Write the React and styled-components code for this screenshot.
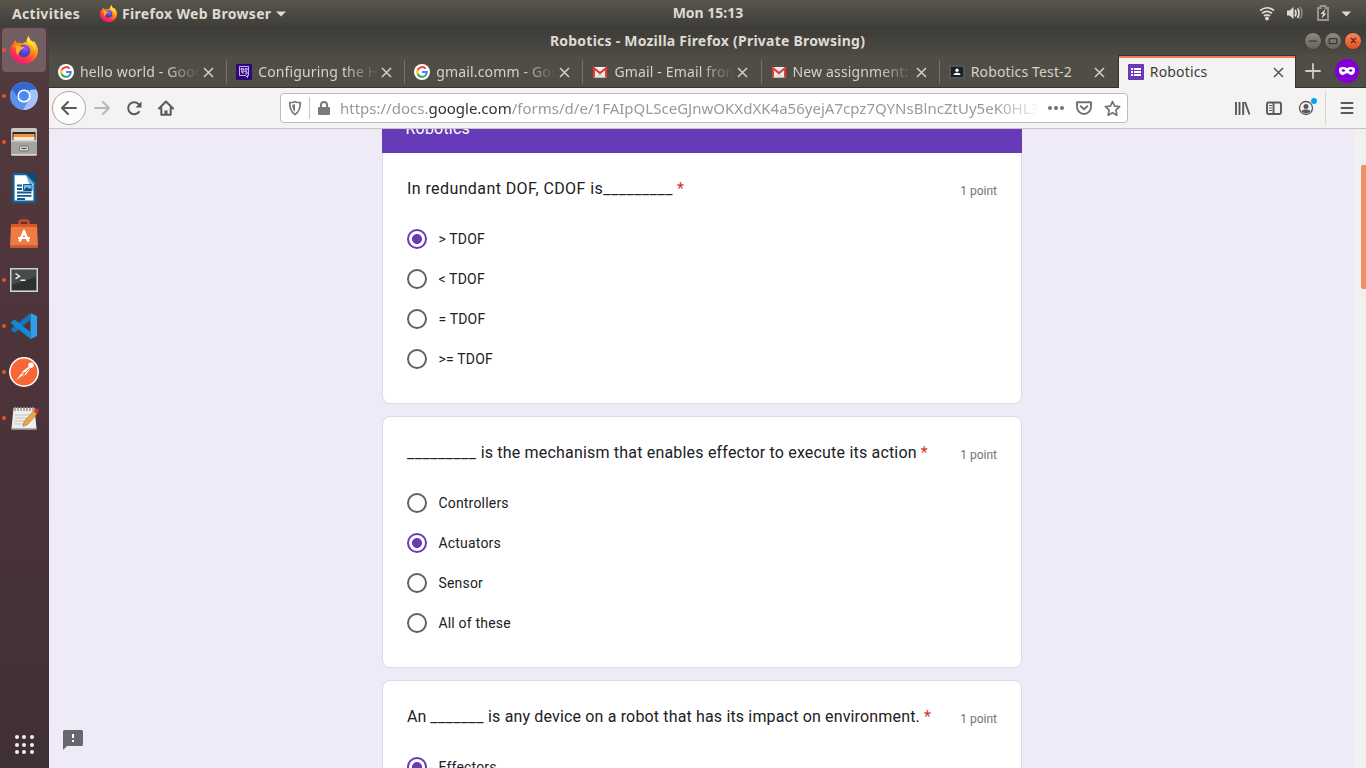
import React from "react";
import styled, { createGlobalStyle, css } from "styled-components";

const ui = `"Noto Sans", "Open Sans", sans-serif`;

const GlobalStyle = createGlobalStyle`
  * { box-sizing: border-box; }
  html, body { margin: 0; overflow: hidden; }
  svg { display: block; flex: none; }
`;

const Desktop = styled.div`
  width: 1366px;
  height: 768px;
  display: flex;
  flex-direction: column;
  overflow: hidden;
  font-family: ${ui};
`;

const Text = styled.span`
  white-space: pre;
  letter-spacing: ${(p) => p.$spacing || 0}px;
`;

/* ---------- system bar ---------- */
const SystemBar = styled.header`
  height: 27px;
  flex: none;
  display: grid;
  grid-template-columns: 1fr auto 1fr;
  align-items: center;
  padding: 0 14px 0 12px;
  background: linear-gradient(#59564d, #3e3d39);
  color: #dfdbd2;
  font-size: 14px;
  font-weight: 700;
  line-height: 26px;
`;
const SystemGroup = styled.div`
  display: flex;
  align-items: center;
  justify-content: ${(p) => (p.$end ? "flex-end" : "flex-start")};
`;
const AppMenu = styled.div`
  display: flex;
  align-items: center;
  margin-left: 20px;
  gap: 5px;
`;
const Clock = styled.div`
  padding-left: 52px;
  padding-bottom: 1px;
`;

/* ---------- dock ---------- */
const Workspace = styled.div`
  flex: 1;
  display: flex;
  min-height: 0;
`;
const Dock = styled.nav`
  width: 49px;
  flex: none;
  display: flex;
  flex-direction: column;
  gap: 2px;
  padding: 1px 2px 9px;
  background: linear-gradient(#523a3f, #4d343a 45%, #3f3034);
`;
const Launcher = styled.div`
  height: 44px;
  width: 44px;
  display: flex;
  align-items: center;
  border-radius: 4px;
  background: ${(p) => (p.$active ? "#725d61" : "transparent")};
`;
const RunningDot = styled.i`
  width: 4px;
  height: 4px;
  border-radius: 50%;
  margin-right: 3px;
  background: ${(p) => (p.$on ? "#e95420" : "transparent")};
`;
const LauncherIcon = styled.div`
  width: 30px;
  display: grid;
  justify-items: center;
`;
const AppGrid = styled.div`
  margin: auto 0 5px 12.5px;
  display: grid;
  grid-template-columns: repeat(3, 4px);
  gap: 3.5px;
  i { height: 4px; border-radius: 50%; background: #f2f0ee; }
`;

/* ---------- browser chrome ---------- */
const Browser = styled.main`
  flex: 1;
  min-width: 0;
  display: flex;
  flex-direction: column;
  background: #504d46;
`;
const TitleBar = styled.div`
  height: 28px;
  flex: none;
  display: grid;
  grid-template-columns: 1fr auto 1fr;
  align-items: center;
  padding: 0 5px 1px;
  background: linear-gradient(#3c3b37, #4d4a43);
  color: #dfdbd2;
  font-size: 14px;
  font-weight: 700;
`;
const WindowButtons = styled.div`
  grid-column: 3;
  display: flex;
  justify-content: flex-end;
  gap: 4px;
`;
const WindowButton = styled.span`
  width: 16px;
  height: 16px;
  border-radius: 50%;
  display: grid;
  place-items: center;
  background: ${(p) => (p.$close ? "linear-gradient(#f4845f, #e4521f)" : "linear-gradient(#8c8981, #66645d)")};
  box-shadow: 0 0 0 .5px #35342f;
`;
const TabStrip = styled.div`
  height: 33px;
  flex: none;
  display: flex;
  background: #504d46;
  border-bottom: 1px solid #34332f;
`;
const Tab = styled.div`
  width: 178.15px;
  height: 33px;
  flex: none;
  display: flex;
  align-items: center;
  padding: 1px 8px 0 9px;
  font-size: 14px;
  color: #d6d2c8;
  ${(p) => p.$active ? css`
    color: #3d3c3a;
    background: #f4f3f1;
    border: 1px solid #34332f;
    border-bottom: 0;
    padding: 0 8px 0 9px;
    box-shadow: inset 0 2px #f27a50;
  ` : css`
    background: linear-gradient(#77736a, #77736a) right 5px / 1px 24px no-repeat;
    ${p.$last && "background: none;"}
  `}
`;
const TabLabel = styled.div`
  width: 120px;
  margin-left: 6px;
  overflow: hidden;
  white-space: pre;
  padding-bottom: 1px;
  letter-spacing: 0.15px;
  mask-image: ${(p) => (p.$fade ? "linear-gradient(90deg, #000 86px, transparent 120px)" : "none")};
`;
const TabClose = styled.div`
  margin-left: 3px;
`;
const TabActions = styled.div`
  flex: 1;
  display: flex;
  align-items: center;
  justify-content: space-between;
  padding: 0 7px 0 9px;
`;
const Toolbar = styled.div`
  height: 41px;
  flex: none;
  display: flex;
  align-items: center;
  background: #f4f3f1;
  border-bottom: 1px solid #c6c3c0;
`;
const NavButtons = styled.div`
  width: 231px;
  display: flex;
  align-items: center;
  padding-left: 3px;
`;
const BackButton = styled.div`
  width: 34px;
  height: 34px;
  border: 1px solid #a9a7a4;
  border-radius: 50%;
  background: #fcfcfb;
  display: grid;
  place-items: center;
  margin-right: 8px;
`;
const NavIcon = styled.div`
  margin-right: ${(p) => p.$gap}px;
`;
const UrlBar = styled.div`
  width: 848px;
  height: 30px;
  display: flex;
  align-items: center;
  border: 1px solid #bfbcb9;
  border-radius: 4px;
  background: #fff;
  padding: 0 6px;
`;
const UrlDivider = styled.i`
  width: 1px;
  height: 22px;
  background: #c8c6c4;
  margin: 0 7px 0 6px;
`;
const Url = styled.div`
  width: 700px;
  margin-left: 9px;
  overflow: hidden;
  white-space: pre;
  font-size: 15px;
  color: #999;
  mask-image: linear-gradient(90deg, #000 655px, transparent 700px);
  b { font-weight: 400; color: #333; }
`;
const UrlActions = styled.div`
  display: flex;
  align-items: center;
  gap: 12px;
  margin-left: 9px;
`;
const ToolActions = styled.div`
  flex: 1;
  display: flex;
  align-items: center;
  justify-content: flex-end;
  padding-right: 11px;
`;
const ToolDivider = styled.i`
  width: 1px;
  height: 34px;
  background: #d8d6d3;
  margin: 0 13px 0 6px;
`;

/* ---------- form ---------- */
const Page = styled.div`
  flex: 1;
  min-height: 0;
  display: flex;
  background: #eeeaf8;
`;
const Aside = styled.div`
  width: 333px;
  display: flex;
  align-items: flex-end;
  padding: 0 0 18px 14px;
`;
const Form = styled.div`
  width: 640px;
  overflow: hidden;
  font-family: Roboto, sans-serif;
  color: #202124;
`;
const Banner = styled.div`
  height: 24px;
  background: #673ab7;
  color: #fff;
  padding-left: 23.5px;
  font-size: 16px;
  letter-spacing: 0.2px;
  line-height: 24px;
  overflow: hidden;
  span { display: block; margin-top: -12px; }
`;
const Card = styled.section`
  height: ${(p) => (p.$first ? 251 : 252)}px;
  margin-bottom: 12px;
  padding: 24px 24px 0;
  border: 1px solid #dadce0;
  border-radius: 8px;
  background: #fff;
  ${(p) => p.$first && css`border-top: 0; border-radius: 0 0 8px 8px;`}
`;
const QuestionHead = styled.div`
  display: flex;
  justify-content: space-between;
  height: 24px;
  margin-bottom: 18px;
  line-height: 23px;
  font-size: 16px;
  white-space: pre;
`;
const Required = styled.span`
  color: #d93025;
`;
const Points = styled.span`
  font-size: 12px;
  line-height: 29px;
  color: #70757a;
`;
const Option = styled.div`
  height: 40px;
  display: flex;
  align-items: center;
  gap: 11.4px;
  font-size: 14px;
  letter-spacing: 0.2px;
`;
const Radio = styled.span`
  width: 20px;
  height: 20px;
  border-radius: 50%;
  border: 2px solid ${(p) => (p.$on ? "#673ab7" : "#5f6368")};
  background: ${(p) => (p.$on ? "radial-gradient(circle, #673ab7 4.6px, transparent 5.3px)" : "none")};
`;
const ScrollGutter = styled.div`
  margin-left: auto;
  width: 12px;
  background: #f1f0ee;
  padding: 36px 0 0 7px;
`;
const ScrollThumb = styled.div`
  height: 124px;
  background: #f08e66;
  border-radius: 2px 0 0 2px;
`;

/* ---------- icons ---------- */
const Firefox = ({ size }) => (
  <svg width={size} height={size} viewBox="0 0 28 28">
    <defs>
      <linearGradient id="fxBody" x1=".85" y1="0" x2=".25" y2="1">
        <stop offset="0" stopColor="#fff44f" /><stop offset=".4" stopColor="#ff980e" />
        <stop offset=".72" stopColor="#ff3647" /><stop offset="1" stopColor="#e31587" />
      </linearGradient>
      <radialGradient id="fxGlobe" cx=".6" cy=".3"><stop offset="0" stopColor="#9059ff" /><stop offset="1" stopColor="#4a3fc0" /></radialGradient>
    </defs>
    <path fill="url(#fxBody)" d="M4 6.5c.3-.9.8-1.700 1.500-2.200.2 1.100.7 2 1.500 2.700 1.900-.6 4-.4 5.500.500 1-1.200 2.600-1.800 4-1.500C16.300 3.500 17 1.700 18.800 0c.3 2.900 2.100 4.200 3.900 6.100.5-.1.600-.800.500-1.500 3.300 3 4.900 6.800 4.800 10.500C27.800 22.500 21.700 28 14 28S0 22 0 14.700C0 11.500 1.500 8.400 4 6.500z" />
    <circle cx="14" cy="15" r="6.200" fill="url(#fxGlobe)" />
    <path fill="#ffae22" d="M3.500 10.500C6 9 8 9.200 10 10.200c1.200.7 2.600.5 4.300.6-.2 1.500-1.500 2.200-3 2.700-.7.400-.9 1.300-1.700 2.200-1 1-1.600 2.300-1.200 3.500-2.700-1.900-2.800-5.500-1.900-7.500-1.200-.4-2.300-.9-3-1.200z" />
    <path fill="#ffe34a" d="M18.800 0c.3 2.900 2.100 4.200 3.900 6.100 2.300 2.500 3.300 6 2.300 9.200-.5-3.400-2.500-5.800-5.500-7-2-.9-3.200-4.500-.7-8.300z" opacity=".8" />
  </svg>
);
const Chromium = () => (
  <svg width="28" height="28" viewBox="0 0 28 28">
    <circle cx="14" cy="14" r="14" fill="#5b93ec" />
    <path d="M2 7A14 14 0 0 1 26.200 7.500L14 8 8.500 17z" fill="#3367cf" />
    <path d="M26.200 7.500A14 14 0 0 1 13 28l6.300-10.500L20 8z" fill="#a4c4f8" />
    <circle cx="14" cy="14" r="6.600" fill="#fff" /><circle cx="14" cy="14" r="5" fill="#4b8bf0" />
  </svg>
);
const Files = () => (
  <svg width="28" height="28" viewBox="0 0 28 28">
    <rect x="1" y="0" width="26" height="28" rx="2" fill="#c9c7c3" />
    <path d="M2.500 4h23v8h-23z" fill="#352820" /><path d="M3.500 6h21v5h-21z" fill="#ed9144" /><path d="M3.500 9h21v3h-21z" fill="#f3e9d8" />
    <path d="M1 12h26v14a1.500 1.500 0 0 1-1.500 1.500h-23A1.500 1.500 0 0 1 1 26z" fill="#a6a49f" /><path d="M1 12h26v1.500H1zM1 26h26v1H1z" fill="#d6d4d0" />
    <rect x="9.500" y="18" width="9" height="5" rx="1.200" fill="#d9d7d3" stroke="#6f6d69" /><path d="M11.500 20.500h5" stroke="#555" strokeWidth="1.300" />
  </svg>
);
const Writer = () => (
  <svg width="28" height="30" viewBox="0 0 28 30">
    <path d="M3.500 1.200h13l8 8.500v19h-21z" fill="#fff" stroke="#0f639b" strokeWidth="2.200" />
    <path d="M15 0h11v11z" fill="#0b4b78" /><path d="M15.500 0l10.500 11h-7z" fill="#2a8dcb" opacity=".65" />
    <path d="M7 12.500h5M7 16h5M7 19.500h14.500M7 22.800h14.500M7 26h8" stroke="#0f5c92" strokeWidth="1.800" />
    <path d="M13.500 11.500h8.500v6h-8.500z" fill="#79b6df" stroke="#0f5c92" /><path d="M14 17l3-3 2 2 2-1v2z" fill="#12415f" />
  </svg>
);
const Software = () => (
  <svg width="28" height="30" viewBox="0 0 28 30">
    <path d="M9.500 7V3.500C9.500 2 10.500 1.500 12 1.500h4c1.500 0 2.500.5 2.500 2V7" fill="none" stroke="#d3491d" strokeWidth="2.400" />
    <path d="M1 5h26l1 23.500H0z" fill="#ec7c41" /><path d="M1 5h26v3H1z" fill="#d9582b" /><path d="M0 26h28v2.500H0z" fill="#d55c2b" />
    <path d="M9.500 22.500L14 12.500l4.500 10" stroke="#fff" strokeWidth="2.500" fill="none" /><path d="M8 19h12" stroke="#fff" strokeWidth="2" />
  </svg>
);
const Terminal = () => (
  <svg width="28" height="24" viewBox="0 0 28 24">
    <rect x=".7" y=".7" width="26.600" height="22.600" fill="#2c3132" stroke="#d4d3d0" strokeWidth="1.700" />
    <path d="M2 2h24v7L2 17z" fill="#454b4b" />
    <path d="M5.500 5.500l4 2.700-4 2.700M10.500 12.200h5" fill="none" stroke="#eee" strokeWidth="1.400" />
  </svg>
);
const Code = () => (
  <svg width="28" height="28" viewBox="0 0 28 28">
    <path d="M20.500 1.200L27 4v20l-6.500 3z" fill="#2d9fec" />
    <path d="M20.500 1l-.2 7L5 20.500 1.200 18.700V17z" fill="#1178bd" /><path d="M1.200 10L4.500 7.500 20.500 20v7L1.200 11.500z" fill="#1689d2" />
  </svg>
);
const Postman = () => (
  <svg width="30" height="30" viewBox="0 0 30 30">
    <circle cx="15" cy="15" r="14.200" fill="#f96736" stroke="#fff" strokeWidth="1.500" />
    <path d="M7 23.500l7-9.500 5.500-4.200 1.700 1.700-4 5.700z" fill="#fff" /><circle cx="22" cy="8.200" r="2.700" fill="#fff" />
    <path d="M12.500 16.500l3.500-.8-1.500 3M8 23l6.500-5 5.500-6.500" fill="none" stroke="#ee6b3d" strokeWidth="1" />
  </svg>
);
const Notes = () => (
  <svg width="29" height="28" viewBox="0 0 29 28">
    <path d="M3.500 4h21l2 20.500H1.500z" fill="#eeeeeb" /><path d="M1.500 24h25v1.700h-25z" fill="#b1aead" />
    <path d="M5 3v4M8 3v4M11 3v4M14 3v4M17 3v4M20 3v4M23 3v4" stroke="#979592" strokeWidth="1.500" />
    <path d="M5 11h15M5 14h12M4.500 17h11M4.500 20h10" stroke="#c4c4c1" />
    <path d="M14.200 17.500L23.500 7l3.500 3L17.500 20.500l-4.500 1.800z" fill="#eba744" stroke="#9d6423" strokeWidth=".6" />
    <path d="M23.500 7l2.500-2.200c1.500-.8 3.500.8 2.500 2.800L27 10z" fill="#d9343e" />
  </svg>
);
const Google = () => (
  <svg width="16" height="16" viewBox="0 0 16 16">
    <circle cx="8" cy="8" r="8" fill="#fff" />
    <g fill="none" strokeWidth="2">
      <path d="M11.600 4.600A4.800 4.800 0 0 0 3.700 6" stroke="#ea4335" /><path d="M3.700 6a4.800 4.800 0 0 0 0 4" stroke="#fbbc05" />
      <path d="M3.700 10a4.800 4.800 0 0 0 7.500 1.700" stroke="#34a853" /><path d="M8 8h4.800a4.800 4.800 0 0 1-1.600 3.700" stroke="#4285f4" />
    </g>
  </svg>
);
const PurpleNote = () => (
  <svg width="16" height="16" viewBox="0 0 16 16">
    <path d="M0 0h16v16H0z" fill="#2f0878" />
    <path d="M3.500 2.500h9v9h-1v2l-2-2h-6zM5 4.500h2.500v1.500H5zM9 4.500h2.200V6H9zM5 8h2v2M9 8h2.200v2H9M5 7.200h6" fill="none" stroke="#d9c9ff" strokeWidth=".9" />
  </svg>
);
const Gmail = () => (
  <svg width="16" height="16" viewBox="0 0 16 16">
    <path d="M1 3h14v10.500H1z" fill="#f3f1ef" /><path d="M3 13.500L8 9l5 4.500z" fill="#dedbd8" />
    <path d="M2 13.500V4.200l6 4.900 6-4.900v9.300" fill="none" stroke="#dc4035" strokeWidth="2.100" />
  </svg>
);
const Classroom = () => (
  <svg width="16" height="16" viewBox="0 0 16 16">
    <rect y="1" width="16" height="14" rx="1" fill="#51555b" /><path d="M2 3h12v10H2z" fill="#1c2024" />
    <circle cx="8" cy="6.200" r="1.700" fill="#fff" /><path d="M4.500 11c0-3 7-3 7 0z" fill="#fff" />
  </svg>
);
const FormsIcon = () => (
  <svg width="16" height="16" viewBox="0 0 16 16">
    <rect width="16" height="16" rx="1" fill="#673ab7" />
    <path d="M3 4h2v2H3zM6 4h7v2H6zM3 7h2v2H3zM6 7h7v2H6zM3 10h2v2H3zM6 10h7v2H6z" fill="#fff" />
  </svg>
);
const Cross = ({ color }) => (
  <svg width="11" height="11" viewBox="0 0 11 11"><path d="M1 1l9 9M10 1l-9 9" stroke={color} strokeWidth="1.600" /></svg>
);
const Mask = () => (
  <svg width="24" height="24" viewBox="0 0 24 24">
    <circle cx="12" cy="12" r="12" fill="#8000d7" />
    <path fillRule="evenodd" fill="#fff" d="M4 10.500C4.200 7.500 9 7.500 12 9c3-1.500 7.800-1.500 8 1.500.1 3-1.300 5.500-3.800 5.500-1.700 0-2.500-1.700-4.200-1.700S9.500 16 7.800 16C5.300 16 3.900 13.500 4 10.500zm2.300 1.200c1.500 1.600 3 1.500 4-.2-1.300-1.600-3-1.600-4 .2zm7.400-.2c1 1.700 2.500 1.800 4 .2-1-1.800-2.700-1.800-4-.2z" />
  </svg>
);
const Line = ({ size = 16, d, w = 2, color = "#5a5957" }) => (
  <svg width={size} height={size} viewBox="0 0 16 16" fill="none" stroke={color} strokeWidth={w} strokeLinecap="round" strokeLinejoin="round"><path d={d} /></svg>
);
const Caret = () => (
  <svg width="10" height="6" viewBox="0 0 10 6"><path d="M0 .5h10L5 5.500z" fill="#dfdbd2" /></svg>
);
const StatusIcons = () => (
  <svg width="92" height="18" viewBox="1260 5 92 18">
    <g fill="none" stroke="#dfdbd2" strokeWidth="1.700">
      <path d="M1260 10.500q7-5.500 14 0" /><path d="M1262 13.300q5-4 10 0" /><path d="M1264 16q3-2.400 6 0" />
      <path d="M1295 10q2 3 0 6.500" /><path d="M1297.500 8.500q3 4.500 0 9.500" /><path d="M1300 7q4 6 0 12" opacity=".4" />
    </g>
    <circle cx="1267" cy="18.500" r="1.900" fill="#dfdbd2" />
    <path d="M1287 10.500h2.500l4-3.500v12l-4-3.500h-2.500z" fill="#dfdbd2" />
    <path d="M1318 8h2.500V6h5v2h2.500v12h-10z" fill="none" stroke="#98958d" strokeWidth="1.900" />
    <path d="M1325.500 9l-5 5h2.500l-1.500 4.500 5-5h-2.500z" fill="#dfdbd2" />
    <path d="M1341.500 11.500h9.500l-4.700 5z" fill="#dfdbd2" />
  </svg>
);
const Reload = () => (
  <svg width="16" height="16" viewBox="0 0 16 16" fill="none" stroke="#5a5957" strokeWidth="2">
    <path d="M13.400 11.200A6 6 0 1 1 12.300 3.800L13.500 5" /><path d="M15.500 1.500v6H9.500z" fill="#5a5957" stroke="none" />
  </svg>
);
const Home = () => (
  <svg width="16" height="16" viewBox="0 0 16 16" fill="none" stroke="#5a5957" strokeWidth="2" strokeLinejoin="round" strokeLinecap="round">
    <path d="M1 8.500L8 1.500l7 7M3.300 8v6.700h9.400V8" /><path d="M8 14v-3.500" strokeWidth="3" strokeLinecap="butt" />
  </svg>
);
const Shield = () => (
  <svg width="16" height="16" viewBox="0 0 16 16"><path d="M8 1.700c2 .7 3.700 1 5.300 1C13.300 8.500 12 12 8 14.500 4 12 2.700 8.500 2.700 2.700c1.600 0 3.300-.3 5.300-1z" fill="none" stroke="#7b7a78" strokeWidth="1.700" /><path d="M8 4.200v7.700C6 10.200 5.200 8 5.100 4.800z" fill="#7b7a78" /></svg>
);
const Lock = () => (
  <svg width="14" height="16" viewBox="0 0 14 16"><path d="M4 7V5a3 3 0 0 1 6 0v2" fill="none" stroke="#7b7a78" strokeWidth="2" /><rect x="1" y="7" width="12" height="8" rx="1.300" fill="#7b7a78" /></svg>
);
const Pocket = () => (
  <svg width="16" height="16" viewBox="0 0 16 16" fill="none" stroke="#737270" strokeWidth="1.900" strokeLinejoin="round" strokeLinecap="round"><path d="M1 2.200h14V7a7 7 0 0 1-14 0z" /><path d="M4.700 6.200L8 9.300l3.300-3.100" /></svg>
);
const Star = () => (
  <svg width="17" height="17" viewBox="0 0 17 17"><path d="M8.500 1.500l2.100 4.600 5 .6-3.700 3.500 1 5-4.400-2.500-4.400 2.500 1-5L1.400 6.700l5-.6z" fill="none" stroke="#737270" strokeWidth="1.700" strokeLinejoin="round" /></svg>
);
const More = () => (
  <svg width="16" height="16" viewBox="0 0 16 16" fill="#737270"><circle cx="2" cy="8" r="2" /><circle cx="8" cy="8" r="2" /><circle cx="14" cy="8" r="2" /></svg>
);
const ToolIcons = () => (
  <svg width="86" height="24" viewBox="1233 96 86 24" fill="none" stroke="#5a5957" strokeWidth="1.900">
    <path d="M1236 102v13M1239.500 102v13M1243.200 102v13M1245 102l4.500 12.500" />
    <rect x="1267" y="102.500" width="14" height="11.500" rx="1.500" /><path d="M1273.500 102.500v11.500" /><path d="M1269 105.500h3M1269 108h3M1269 110.500h3" strokeWidth="1" />
    <circle cx="1306" cy="108" r="6.500" strokeWidth="1.300" /><circle cx="1306" cy="106.500" r="2.500" fill="#5a5957" stroke="none" /><path d="M1301.500 111c1.500-2 7.500-2 9 0-1.500 3.300-7.500 3.300-9 0z" fill="#5a5957" stroke="none" />
    <circle cx="1314" cy="101" r="3" fill="#00a8f3" stroke="none" />
  </svg>
);
const Feedback = () => (
  <svg width="20" height="20" viewBox="0 0 20 20"><path d="M1.500 0h17A1.500 1.500 0 0 1 20 1.500v13a1.500 1.500 0 0 1-1.500 1.500H4l-4 4V1.500A1.500 1.500 0 0 1 1.500 0z" fill="#69666f" /><path d="M9 4h2v4H9zM9 10h2v2H9z" fill="#fff" /></svg>
);

/* ---------- data ---------- */
const launchers = [
  [<Firefox size={28} />, true], [<Chromium />, true], [<Files />, true], [<Writer />, false], [<Software />, false],
  [<Terminal />, true], [<Code />, true], [<Postman />, true], [<Notes />, true],
];
const tabs = [
  { icon: <Google />, label: "hello world - Goog", fade: true },
  { icon: <PurpleNote />, label: "Configuring the H", fade: true },
  { icon: <Google />, label: "gmail.comm - Goo", fade: true },
  { icon: <Gmail />, label: "Gmail - Email from", fade: true },
  { icon: <Gmail />, label: "New assignment:", fade: true },
  { icon: <Classroom />, label: "Robotics Test-2", last: true },
  { icon: <FormsIcon />, label: "Robotics", active: true },
];
const questions = [
  { parts: [["In redundant DOF, CDOF is", 0.41], ["_________", 0.55]], options: ["> TDOF", "< TDOF", "= TDOF", ">= TDOF"], chosen: 0 },
  { parts: [["_________", 0.5], [" is the mechanism that enables effector to execute its action", 0.19]], options: ["Controllers", "Actuators", "Sensor", "All of these"], chosen: 1 },
  { parts: [["An ", 0], ["_______", 0.45], [" is any device on a robot that has its impact on environment.", 0.155]], options: ["Effectors"], chosen: 0 },
];

export default function App() {
  return (
    <Desktop>
      <GlobalStyle />
      <SystemBar>
        <SystemGroup>
          <Text $spacing={0.3}>Activities</Text>
          <AppMenu><Firefox size={17} /><Text $spacing={0.32}>Firefox Web Browser</Text><Caret /></AppMenu>
        </SystemGroup>
        <Clock><Text>Mon 15:13</Text></Clock>
        <SystemGroup $end><StatusIcons /></SystemGroup>
      </SystemBar>
      <Workspace>
        <Dock>
          {launchers.map(([icon, running], i) => (
            <Launcher key={i} $active={i === 0}><RunningDot $on={running} /><LauncherIcon>{icon}</LauncherIcon></Launcher>
          ))}
          <AppGrid>{Array.from({ length: 9 }, (_, i) => <i key={i} />)}</AppGrid>
        </Dock>
        <Browser>
          <TitleBar>
            <span />
            <Text $spacing={0.23}>Robotics - Mozilla Firefox (Private Browsing)</Text>
            <WindowButtons>
              <WindowButton><Line size={10} d="M2 8h12" color="#3c3b37" /></WindowButton>
              <WindowButton><Line size={10} d="M2 4h12v8H2z" color="#3c3b37" /></WindowButton>
              <WindowButton $close><Line size={9} d="M4 4l8 8M12 4l-8 8" color="#5b2410" /></WindowButton>
            </WindowButtons>
          </TitleBar>
          <TabStrip>
            {tabs.map((t, i) => (
              <Tab key={i} $active={t.active} $last={t.last}>
                {t.icon}
                <TabLabel $fade={t.fade}>{t.label}</TabLabel>
                <TabClose><Cross color={t.active ? "#5a5957" : "#d0ccc3"} /></TabClose>
              </Tab>
            ))}
            <TabActions>
              <Line d="M8 1v14M1 8h14" color="#d0ccc3" w={1.8} />
              <Mask />
            </TabActions>
          </TabStrip>
          <Toolbar>
            <NavButtons>
              <BackButton><Line d="M15 8H1.500M7 2L1 8l6 6" /></BackButton>
              <NavIcon $gap={16}><Line d="M1 8h13.500M9 2l6 6-6 6" color="#b9b8b6" /></NavIcon>
              <NavIcon $gap={16}><Reload /></NavIcon>
              <Home />
            </NavButtons>
            <UrlBar>
              <Shield />
              <UrlDivider />
              <Lock />
              <Url><Text>https://docs.</Text><b><Text>google.com</Text></b><Text $spacing={0.02}>/forms/d/e/1FAIpQLSceGJnwOKXdXK4a56yejA7cpz7QYNsBlncZtUy5eK0HL3</Text></Url>
              <UrlActions><More /><Pocket /><Star /></UrlActions>
            </UrlBar>
            <ToolActions>
              <ToolIcons />
              <ToolDivider />
              <Line d="M2.500 3h11M2.500 8h11M2.500 13h11" />
            </ToolActions>
          </Toolbar>
          <Page>
            <Aside><Feedback /></Aside>
            <Form>
              <Banner><span>Robotics</span></Banner>
              {questions.map((q, i) => (
                <Card key={i} $first={i === 0}>
                  <QuestionHead>
                    <div>
                      {q.parts.map(([text, spacing], j) => <Text key={j} $spacing={spacing}>{text}</Text>)}
                      <Required> *</Required>
                    </div>
                    <Points>1 point</Points>
                  </QuestionHead>
                  {q.options.map((o, j) => (
                    <Option key={o}><Radio $on={j === q.chosen} />{o}</Option>
                  ))}
                </Card>
              ))}
            </Form>
            <ScrollGutter><ScrollThumb /></ScrollGutter>
          </Page>
        </Browser>
      </Workspace>
    </Desktop>
  );
}
